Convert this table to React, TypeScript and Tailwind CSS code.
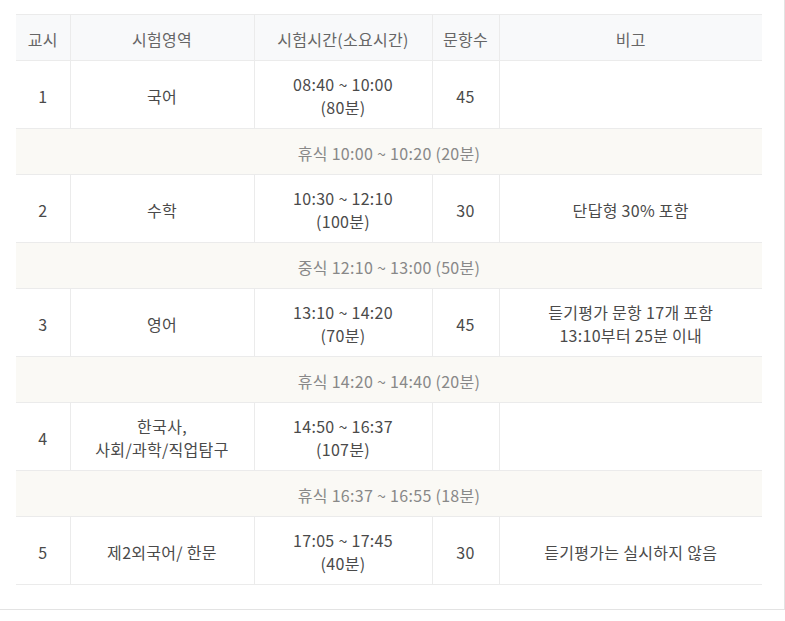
import React from 'react'

type Row =
  | { kind: 'exam'; no: string; subject: string[]; time: string; dur: string; count: string; note: string[] }
  | { kind: 'break'; text: string }

const rows: Row[] = [
  { kind: 'exam', no: '1', subject: ['국어'], time: '08:40 ~ 10:00', dur: '(80분)', count: '45', note: [] },
  { kind: 'break', text: '휴식 10:00 ~ 10:20 (20분)' },
  { kind: 'exam', no: '2', subject: ['수학'], time: '10:30 ~ 12:10', dur: '(100분)', count: '30', note: ['단답형 30% 포함'] },
  { kind: 'break', text: '중식 12:10 ~ 13:00 (50분)' },
  {
    kind: 'exam',
    no: '3',
    subject: ['영어'],
    time: '13:10 ~ 14:20',
    dur: '(70분)',
    count: '45',
    note: ['듣기평가 문항 17개 포함', '13:10부터 25분 이내'],
  },
  { kind: 'break', text: '휴식 14:20 ~ 14:40 (20분)' },
  { kind: 'exam', no: '4', subject: ['한국사,', '사회/과학/직업탐구'], time: '14:50 ~ 16:37', dur: '(107분)', count: '', note: [] },
  { kind: 'break', text: '휴식 16:37 ~ 16:55 (18분)' },
  { kind: 'exam', no: '5', subject: ['제2외국어/ 한문'], time: '17:05 ~ 17:45', dur: '(40분)', count: '30', note: ['듣기평가는 실시하지 않음'] },
]

// 셀 공통 스타일
const cell = 'border-r border-[#ebebeb] last:border-r-0 text-center align-middle pt-[3px]'

export default function App() {
  return (
    <div
      className="w-[785px] h-[621px] bg-white"
      style={{ fontFamily: '"Noto Sans CJK KR", "Noto Sans", sans-serif' }}
    >
      <div className="w-[785px] h-[610px] border-r border-b border-[#e3e3e3] pt-[14px] pl-[16px]">
        <table className="w-[746px] border-collapse text-[16px] tracking-[0.3px] leading-[23px] text-[#4a4a4a] table-fixed">
          <colgroup>
            <col className="w-[54px]" />
            <col className="w-[184px]" />
            <col className="w-[178px]" />
            <col className="w-[67px]" />
            <col />
          </colgroup>
          <thead>
            <tr className="h-[46px] bg-[#f8f9fa] border-t border-b border-[#ebebeb] text-[#666]">
              <th className={`${cell} font-normal`}>교시</th>
              <th className={`${cell} font-normal`}>시험영역</th>
              <th className={`${cell} font-normal`}>시험시간(소요시간)</th>
              <th className={`${cell} font-normal`}>문항수</th>
              <th className={`${cell} font-normal`}>비고</th>
            </tr>
          </thead>
          <tbody>
            {rows.map((r, i) =>
              r.kind === 'break' ? (
                <tr key={i} className="h-[46px] bg-[#faf9f5] border-b border-[#ebebeb]">
                  <td colSpan={5} className="text-center text-[#888] pt-[3px]">
                    {r.text}
                  </td>
                </tr>
              ) : (
                <tr key={i} className="h-[68px] border-b border-[#ebebeb]">
                  <td className={cell}>{r.no}</td>
                  <td className={cell}>
                    {r.subject.map((s) => (
                      <div key={s}>{s}</div>
                    ))}
                  </td>
                  <td className={cell}>
                    <div>{r.time}</div>
                    <div>{r.dur}</div>
                  </td>
                  <td className={cell}>{r.count}</td>
                  <td className={cell}>
                    {r.note.map((n) => (
                      <div key={n}>{n}</div>
                    ))}
                  </td>
                </tr>
              )
            )}
          </tbody>
        </table>
      </div>
    </div>
  )
}
